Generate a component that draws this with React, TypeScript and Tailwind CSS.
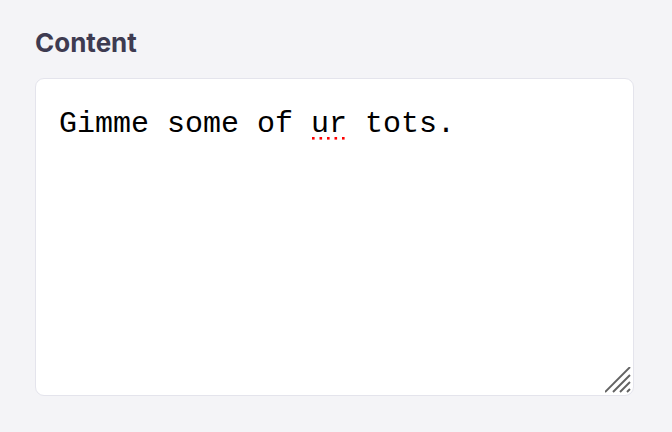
export default function App() {
  return (
    <div className="min-h-[432px] w-[672px] bg-[#f4f4f7] px-[35px] pt-[27px]">
      <label
        htmlFor="content"
        className="block font-['Inter',_'Liberation_Sans',_sans-serif] text-[26px] leading-[32px] font-bold text-[#3e3b51]"
      >
        Content
      </label>
      <div className="relative mt-[19px] w-[599px]">
        <textarea
          id="content"
          defaultValue="Gimme some of ur tots."
          spellCheck={false}
          className="block h-[318px] w-full resize-none rounded-[9px] border-[1.5px] border-[#e4e4ec] bg-white px-[23px] pt-[27px] pb-[22px] font-['Liberation_Mono',_'Courier_New',_monospace] text-[30px] leading-[36px] text-black outline-none"
        />
        {/* spellcheck squiggle under "ur" */}
        <svg className="pointer-events-none absolute left-[277px] top-[59px]" width="36" height="3" viewBox="0 0 36 3">
          {[0, 7.5, 15, 22.5, 30].map((x) => (
            <rect key={x} x={x} y="0" width="2.6" height="2.6" fill="#ff0000" />
          ))}
        </svg>
        {/* resize grip */}
        <svg className="pointer-events-none absolute right-[3px] bottom-[3px]" width="26" height="26" viewBox="0 0 26 26">
          {[0, 8, 15, 22].map((k) => (
            <line key={k} x1={k} y1="25" x2="25" y2={k} stroke="#626262" strokeWidth="1.9" />
          ))}
        </svg>
      </div>
    </div>
  );
}
